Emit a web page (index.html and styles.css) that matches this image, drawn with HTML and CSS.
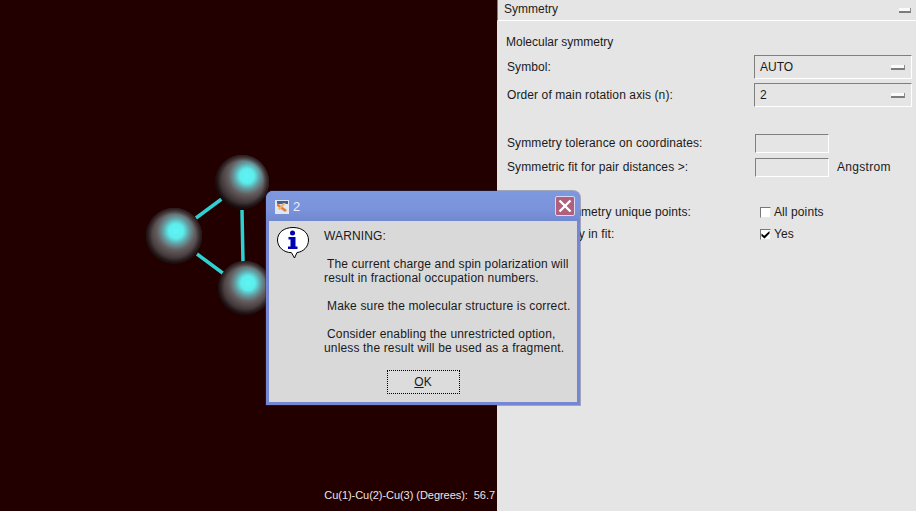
FILE: index.html
```html
<!DOCTYPE html>
<html lang="en">
<head>
<meta charset="utf-8">
<title>Symmetry</title>
<link rel="stylesheet" href="styles.css">
</head>
<body>
<div class="app">
  <main class="viewer">
    <svg class="molecule" width="497" height="511" viewBox="0 0 497 511">
      <defs>
        <radialGradient id="s1" gradientUnits="userSpaceOnUse" cx="247" cy="176" r="36">
          <stop offset="0" stop-color="#5ff4f4"/><stop offset=".2" stop-color="#5cecec"/><stop offset=".36" stop-color="#649a9e"/><stop offset=".52" stop-color="#645b5d"/><stop offset=".78" stop-color="#3a3032"/><stop offset="1" stop-color="#100304"/>
        </radialGradient>
        <radialGradient id="s2" gradientUnits="userSpaceOnUse" cx="176" cy="231" r="37">
          <stop offset="0" stop-color="#5ff4f4"/><stop offset=".2" stop-color="#5cecec"/><stop offset=".36" stop-color="#649a9e"/><stop offset=".52" stop-color="#645b5d"/><stop offset=".78" stop-color="#3a3032"/><stop offset="1" stop-color="#100304"/>
        </radialGradient>
        <radialGradient id="s3" gradientUnits="userSpaceOnUse" cx="248" cy="283" r="36">
          <stop offset="0" stop-color="#5ff4f4"/><stop offset=".2" stop-color="#5cecec"/><stop offset=".36" stop-color="#649a9e"/><stop offset=".52" stop-color="#645b5d"/><stop offset=".78" stop-color="#3a3032"/><stop offset="1" stop-color="#100304"/>
        </radialGradient>
        <radialGradient id="rim">
          <stop offset=".78" stop-color="#140405" stop-opacity="0"/><stop offset="1" stop-color="#140405" stop-opacity=".7"/>
        </radialGradient>
      </defs>
      <g class="bond">
        <line x1="196" y1="218" x2="223" y2="198"/>
        <line x1="242" y1="210" x2="243" y2="262"/>
        <line x1="197" y1="254" x2="224" y2="274"/>
      </g>
      <circle cx="242" cy="182" r="27" fill="url(#s1)"/>
      <circle cx="242" cy="182" r="27" fill="url(#rim)"/>
      <circle cx="174" cy="236" r="28" fill="url(#s2)"/>
      <circle cx="174" cy="236" r="28" fill="url(#rim)"/>
      <circle cx="245" cy="288" r="27" fill="url(#s3)"/>
      <circle cx="245" cy="288" r="27" fill="url(#rim)"/>
    </svg>
    <div class="readout">Cu(1)-Cu(2)-Cu(3) (Degrees):&nbsp; 56.7</div>
  </main>

  <aside class="panel">
    <header class="panel-title">
      <span>Symmetry</span>
      <span class="dash dash-title"></span>
    </header>
    <div class="section-head">Molecular symmetry</div>
    <div class="row row-select">
      <label class="lbl">Symbol:</label>
      <div class="select"><span>AUTO</span><span class="dash"></span></div>
    </div>
    <div class="row row-select">
      <label class="lbl">Order of main rotation axis (n):</label>
      <div class="select"><span>2</span><span class="dash"></span></div>
    </div>
    <div class="row row-input first-input">
      <label class="lbl">Symmetry tolerance on coordinates:</label>
      <div class="input"></div>
    </div>
    <div class="row row-input">
      <label class="lbl">Symmetric fit for pair distances &gt;:</label>
      <div class="input"></div>
      <span class="unit">Angstrom</span>
    </div>
    <div class="row row-check first-check">
      <label class="lbl">Integrate symmetry unique points:</label>
      <div class="check"><span class="box"></span><span>All points</span></div>
    </div>
    <div class="row row-check">
      <label class="lbl">Use symmetry in fit:</label>
      <div class="check">
        <span class="box"><svg width="9" height="9" viewBox="0 0 9 9"><path d="M.5 3.500 L3.300 5.800 L8.500 1 L8.500 3.500 L3.500 8.500 L.5 6 Z" fill="#000"/></svg></span>
        <span>Yes</span>
      </div>
    </div>
  </aside>
</div>

<div class="dialog" role="dialog">
  <div class="dlg-title">
    <svg class="app-icon" width="14" height="14" viewBox="0 0 14 14">
      <rect x="0" y="0" width="14" height="14" fill="#dfe6f4"/>
      <rect x="2" y="1" width="11" height="3" fill="#43608f"/>
      <path d="M2 3 L12 10 L10 12 L2 6 Z" fill="#e0803a"/>
      <path d="M11 3 L5 10 L3 9 L8 3 Z" fill="#e9b66a"/>
    </svg>
    <span class="dlg-name">2</span>
    <button class="close" type="button" aria-label="Close">
      <svg width="14" height="14" viewBox="0 0 14 14"><path d="M1.500 1.500 L12.500 12.500 M12.500 1.500 L1.500 12.500" stroke="#fff" stroke-width="2.400"/></svg>
    </button>
  </div>
  <div class="dlg-body">
    <svg class="info" width="34" height="32" viewBox="0 0 34 32">
      <path d="M17 .5 C26 .5 32.500 5.500 32.500 13 C32.500 20 27 25 21 25.500 L18.500 31 L15.500 25.700 C7.500 25.500 1.500 20 1.500 13 C1.500 5.500 8 .5 17 .5 Z" fill="#fff" stroke="#000" stroke-width="1"/>
      <circle cx="16.500" cy="6" r="2.500" fill="#0000b4"/>
      <path d="M12.500 10 H19.500 V19.500 H21.500 V22 H12 V19.500 H14.500 V12.500 H12.500 Z" fill="#0000b4"/>
    </svg>
    <div class="msg">
      <p class="msg-line">WARNING:</p>
      <p class="msg-block"><span class="ind-a">The current charge and spin polarization will</span><br>result in fractional occupation numbers.</p>
      <p class="msg-block"><span class="ind-a">Make sure the molecular structure is correct.</span></p>
      <p class="msg-block"><span class="ind-a">Consider enabling the unrestricted option,</span><br>unless the result will be used as a fragment.</p>
    </div>
  </div>
  <div class="dlg-actions">
    <button class="ok" type="button"><u>O</u>K</button>
  </div>
</div>
</body>
</html>
```
FILE: styles.css
```css
* { box-sizing: border-box; }
html, body { margin: 0; padding: 0; height: 511px; overflow: hidden; }
body { font-family: "Liberation Sans", Arial, sans-serif; font-size: 12px; color: #1a1a1a; }

.app { display: flex; width: 916px; height: 511px; }

.viewer { position: relative; width: 497px; height: 511px; background: #220000; flex: none; }
.molecule { display: block; }
.bond line { stroke: #2fd0d0; stroke-width: 3.5; }
.readout { position: absolute; right: 2px; bottom: 10px; color: #ece6e6; font-size: 11px; letter-spacing: -.05px; white-space: nowrap; }

.panel { width: 419px; height: 511px; flex: none; background: #e5e5e5; }
.panel-title { height: 21px; display: flex; align-items: center; justify-content: space-between; padding: 0 5px 3px 6px; border-left: 1px solid #8d7777; border-bottom: 1px solid #fff; color: #222; }
.dash { display: block; width: 14px; height: 5px; background: #fafafa; border-bottom: 2px solid #7c7c7c; border-right: 1px solid #8c8c8c; }
.dash-title { width: 12px; margin-top: 4px; }

.section-head { padding: 14px 0 0 9px; height: 32px; line-height: 14px; }

.row { display: flex; align-items: center; padding-left: 10px; }
.lbl { width: 247px; flex: none; letter-spacing: .1px; }

.row-select { height: 28px; }
.select { width: 158px; height: 24px; display: flex; align-items: center; justify-content: space-between; padding: 0 6px 0 5px; border: 1px solid; border-color: #7f7f7f #fff #fff #7f7f7f; }

.row-input { height: 24px; }
.first-input { margin-top: 22px; }
.input { width: 74px; height: 19px; margin-left: 1px; border: 1px solid; border-color: #7f7f7f #fff #fff #7f7f7f; flex: none; }
.unit { margin-left: 8px; letter-spacing: .3px; }

.row-check { height: 22px; }
.first-check { margin-top: 22px; }
.check { display: flex; align-items: center; gap: 3px; padding-left: 6px; letter-spacing: .1px; }
.box { width: 11px; height: 11px; background: #fff; border: 1px solid; border-color: #777 #e8e8e8 #e8e8e8 #777; display: block; }
.box svg { display: block; }

.dialog { position: absolute; left: 266px; top: 191px; width: 314px; height: 214px; display: flex; flex-direction: column; background: #d9d9d9; border: solid #7587d2; border-width: 0 3px 3px 3px; border-radius: 7px 7px 0 0; box-shadow: 0 0 0 1px rgba(40, 50, 110, .35); }
.dlg-title { height: 30px; flex: none; margin: 0 -3px; padding: 1px 5px 0 9px; display: flex; align-items: center; gap: 4px; background: linear-gradient(#7e98e0, #7a93da 60%, #7089d0); border-radius: 7px 7px 0 0; }
.app-icon { flex: none; }
.dlg-name { color: #e8eeff; font-size: 13px; flex: 1; }
.close { width: 20px; height: 20px; padding: 0; margin-top: -1px; border: 1px solid #d8d8ee; border-radius: 2px; background: #b0607c; display: flex; align-items: center; justify-content: center; }

.dlg-body { flex: 1; display: flex; padding: 5px 0 0 7px; }
.info { flex: none; margin-top: 1px; }
.msg { margin-left: 14px; padding-top: 3px; line-height: 14px; letter-spacing: .15px; color: #1a1a1a; white-space: nowrap; }
.msg p { margin: 0 0 14px; }
.ind-a { padding-left: 3px; }

.dlg-actions { display: flex; justify-content: center; flex: none; height: 32px; }
.ok { width: 73px; height: 24px; padding: 0; background: #dcdcdc; border: 1px dotted #000; font: inherit; color: #1a1a1a; display: block; }
```
